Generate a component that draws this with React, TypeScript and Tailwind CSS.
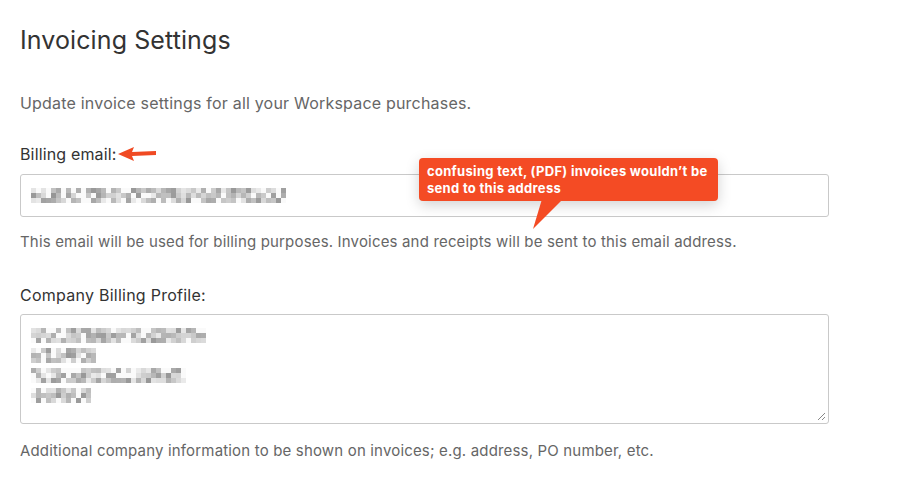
import React from "react";

// deterministic pixel mosaic standing in for the blurred personal data
function mosaic(seed: number, width: number, rows: number) {
  let s = seed;
  const rand = () => {
    s = (s * 9301 + 49297) % 233280;
    return s / 233280;
  };
  const cols = Math.round(width / 5);
  const out: string[][] = [];
  for (let r = 0; r < rows; r++) {
    const row: string[] = [];
    for (let c = 0; c < cols; c++) {
      const v = rand();
      const g = v < 0.2 ? 250 : Math.round(150 + rand() * 85);
      row.push(`rgb(${g},${g},${g})`);
    }
    out.push(row);
  }
  return out;
}

function Blur({ seed, width, rows = 3 }: { seed: number; width: number; rows?: number }) {
  const grid = mosaic(seed, width, rows);
  return (
    <div className="flex flex-col">
      {grid.map((row, i) => (
        <div key={i} className="flex">
          {row.map((c, j) => (
            <div key={j} className="w-[5px] h-[5px]" style={{ backgroundColor: c }} />
          ))}
        </div>
      ))}
    </div>
  );
}

const App = () => {
  return (
    <main
      className="min-h-screen bg-white px-5 pt-6 text-[#333]"
      style={{ fontFamily: "Inter, 'Noto Sans', sans-serif" }}
    >
      <h1 className="text-[25px] leading-[32px] font-normal tracking-[0.1px] text-[#333]">Invoicing Settings</h1>

      <p className="mt-[37px] text-[16px] leading-5 tracking-[0.2px] text-[#666]">
        Update invoice settings for all your Workspace purchases.
      </p>

      <div className="relative mt-[31px] flex items-center">
        <label className="text-[16px] leading-5 tracking-[0.15px] text-[#333]">Billing email:</label>
        <svg width="40" height="16" viewBox="0 0 40 16" className="ml-[1px]">
          <polygon points="0,8 16,1 14,6 38,5 38,9 14,10 16,15" fill="#f04a23" />
        </svg>

        {/* annotation callout */}
        <div className="absolute left-[399px] top-[14px] z-10 w-[299px]">
          <div className="rounded-[4px] bg-[#f44b24] px-[8px] pt-[5px] pb-[4px] text-[13px] font-bold leading-[17px] tracking-[0.3px] text-white shadow-[0_4px_14px_rgba(0,0,0,0.18)]">
            confusing text, (PDF) invoices wouldn’t be
            <br />
            send to this address
          </div>
          <svg width="40" height="32" viewBox="0 0 40 32" className="absolute left-[112px] top-[41px]">
            <polygon points="11,0 32,0 2,30" fill="#f44b24" />
          </svg>
        </div>
      </div>

      <div className="mt-[10px] flex h-[43px] w-[809px] items-center rounded-[3px] border border-[#c9c9c9] px-[10px]">
        <Blur seed={17} width={253} rows={3} />
      </div>

      <p className="mt-[15px] text-[15px] leading-5 tracking-[0.17px] text-[#666]">
        This email will be used for billing purposes. Invoices and receipts will be sent to this email address.
      </p>

      <label className="mt-[33px] block text-[16px] leading-5 tracking-[0.25px] text-[#333]">Company Billing Profile:</label>

      <div className="relative mt-[9px] flex h-[110px] w-[809px] flex-col gap-[5px] rounded-[3px] border border-[#c9c9c9] px-[10px] pt-[13px]">
        <Blur seed={5} width={173} rows={3} />
        <Blur seed={41} width={66} rows={3} />
        <Blur seed={88} width={156} rows={3} />
        <Blur seed={123} width={58} rows={3} />
        <svg width="9" height="9" viewBox="0 0 9 9" className="absolute bottom-[2px] right-[2px]">
          <line x1="8" y1="1" x2="1" y2="8" stroke="#888" strokeWidth="1" />
          <line x1="8" y1="5" x2="5" y2="8" stroke="#888" strokeWidth="1" />
        </svg>
      </div>

      <p className="mt-[17px] text-[15px] leading-5 tracking-[0.17px] text-[#666]">
        Additional company information to be shown on invoices; e.g. address, PO number, etc.
      </p>
    </main>
  );
};

export default App;
